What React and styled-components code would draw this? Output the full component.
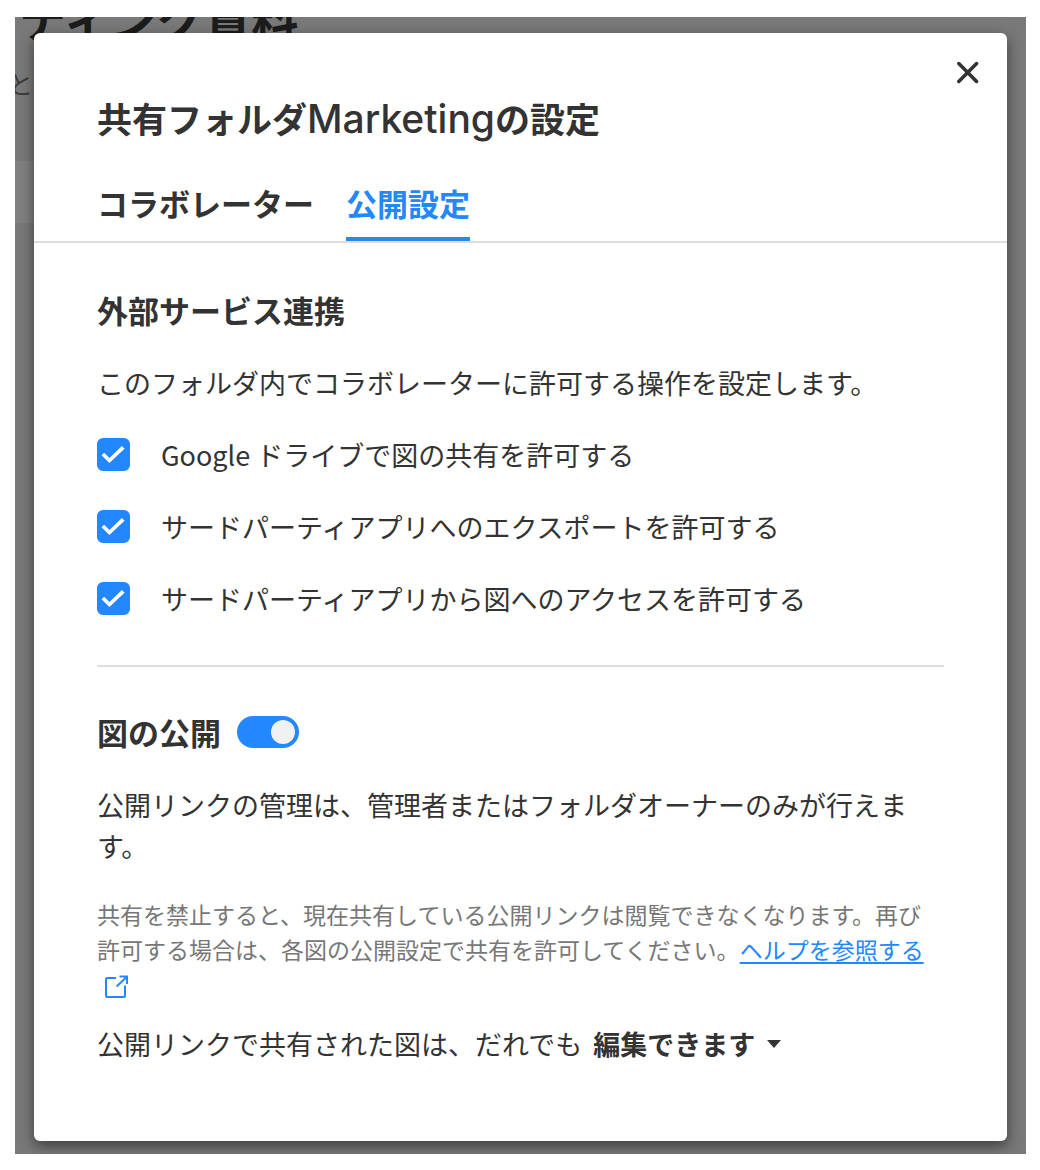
import React, { useState } from 'react';
import styled, { createGlobalStyle } from 'styled-components';

const permissions = [
  { id: 'drive', label: 'Google ドライブで図の共有を許可する' },
  { id: 'export', label: 'サードパーティアプリへのエクスポートを許可する' },
  { id: 'access', label: 'サードパーティアプリから図へのアクセスを許可する' },
];

const Permission = ({ id, label }) => {
  const [checked, setChecked] = useState(true);

  return (
    <CheckRow htmlFor={id}>
      <CheckMark>
        <CheckInput id={id} type="checkbox" checked={checked} onChange={() => setChecked(!checked)} />
        {checked && (
          <svg viewBox="0 0 34 34" aria-hidden="true">
            <path d="M6 16.5 12.8 23.2 27 9.6" fill="none" stroke="#fff" strokeWidth="3.8" />
          </svg>
        )}
      </CheckMark>
      {label}
    </CheckRow>
  );
};

const App = () => {
  const [published, setPublished] = useState(true);

  return (
    <Page>
      <GlobalStyle />
      {/* Folder page dimmed behind the dialog */}
      <Behind aria-hidden="true">
        <BehindTitle>マーケティング資料</BehindTitle>
        <BehindText>ひと</BehindText>
        <BehindBand />
      </Behind>

      <Dialog role="dialog" aria-labelledby="dialog-title">
        <Header>
          <Title id="dialog-title">共有フォルダ<Latin>Marketing</Latin>の設定</Title>
          <CloseButton type="button" aria-label="閉じる">
            <svg width="32" height="32" viewBox="0 0 32 32" aria-hidden="true">
              <path d="M6.8 7.6 24.6 25.4M24.6 7.6 6.8 25.4" stroke="#333" strokeWidth="3.6" strokeLinecap="round" />
            </svg>
          </CloseButton>
        </Header>

        <Tabs role="tablist">
          <Tab type="button" role="tab" aria-selected="false">コラボレーター</Tab>
          <Tab type="button" role="tab" aria-selected="true" $active>公開設定</Tab>
        </Tabs>

        <Body>
          <SectionTitle>外部サービス連携</SectionTitle>
          <Text>このフォルダ内でコラボレーターに許可する操作を設定します。</Text>
          <CheckList>
            {permissions.map((p) => <Permission key={p.id} {...p} />)}
          </CheckList>

          <Divider />

          <SectionRow>
            <SectionTitle as="label" htmlFor="publish">図の公開</SectionTitle>
            <Switch
              id="publish"
              type="checkbox"
              role="switch"
              checked={published}
              onChange={() => setPublished(!published)}
            />
          </SectionRow>
          <Text>公開リンクの管理は、管理者またはフォルダオーナーのみが行えます。</Text>
          <Note>
            共有を禁止すると、現在共有している公開リンクは閲覧できなくなります。再び許可する場合は、各図の公開設定で共有を許可してください。<HelpLink href="#help">ヘルプを参照する</HelpLink>
            <ExternalIcon viewBox="0 0 26 26" aria-hidden="true">
              <path d="M12 4H3a1 1 0 0 0-1 1v17a1 1 0 0 0 1 1h17a1 1 0 0 0 1-1V11.5" />
              <path d="M15.5 2.5H23V10M22.6 2.9 12.6 12.4" />
            </ExternalIcon>
          </Note>
          <AccessRow>
            <label htmlFor="access-level">公開リンクで共有された図は、だれでも</label>
            <SelectBox>
              <Select id="access-level" defaultValue="edit">
                <option value="edit">編集できます</option>
                <option value="view">閲覧できます</option>
              </Select>
              <Caret viewBox="0 0 14 8" aria-hidden="true">
                <path d="M0 0H14L7 8Z" fill="#333" />
              </Caret>
            </SelectBox>
          </AccessRow>
        </Body>
      </Dialog>
    </Page>
  );
};

export default App;

const GlobalStyle = createGlobalStyle`
  * {
    box-sizing: border-box;
  }

  body {
    margin: 17px 14px 16px 15px;
    background: #fff;
    color: #333;
    font-family: 'Noto Sans CJK JP', sans-serif;
  }

  button, select, input {
    margin: 0;
    font-family: inherit;
    color: inherit;
  }
`

const Page = styled.div`
  display: grid;
  grid-template-columns: minmax(0, 1fr);
  overflow: hidden;
  background: #797979;
`

const Behind = styled.div`
  grid-area: 1 / 1;
  color: #1c1c1c;
`

const BehindTitle = styled.div`
  margin: -24px 0 0 -136px;
  font-size: 47px;
  font-weight: 700;
  line-height: 48px;
  white-space: nowrap;
`

const BehindText = styled.div`
  margin: 22px 0 0 -31px;
  color: #3c3c3c;
  font-size: 25px;
  line-height: 41px;
`

const BehindBand = styled.div`
  width: 50%;
  height: 62px;
  margin-top: 57px;
  background: #808080;
`

const Dialog = styled.section`
  grid-area: 1 / 1;
  position: relative;
  margin: 16px 19px 13px;
  padding-bottom: 77px;
  border-radius: 6px;
  background: #fff;
  box-shadow: 0 5px 14px rgba(0, 0, 0, 0.5);
`

const Header = styled.header`
  display: flex;
  justify-content: space-between;
  align-items: flex-start;
  padding: 23px 23px 0 63px;
`

const Title = styled.h1`
  margin: 38px 0 0;
  font-size: 35px;
  font-weight: 700;
  line-height: 48px;
`

const Latin = styled.span`
  font-family: Inter, sans-serif;
  font-size: 39px;
  font-weight: 500;
  line-height: 1;
`

const CloseButton = styled.button`
  display: flex;
  padding: 0;
  border: 0;
  background: none;
  cursor: pointer;
`

const Tabs = styled.div`
  display: flex;
  gap: 32px;
  padding: 41px 63px 0;
  border-bottom: 2px solid #ddd;
`

const Tab = styled.button`
  padding: 0 0 14px;
  border: 0;
  border-bottom: 4px solid ${(props) => (props.$active ? '#2e86e8' : 'transparent')};
  background: none;
  color: ${(props) => (props.$active ? '#2388fb' : '#333')};
  font-size: 31px;
  font-weight: 700;
  line-height: 40px;
  cursor: pointer;
`

const Body = styled.div`
  padding: 43px 63px 0;
`

const SectionTitle = styled.h2`
  margin: 0;
  font-size: 31px;
  font-weight: 700;
  line-height: 48px;
`

const SectionRow = styled.div`
  display: flex;
  align-items: center;
  gap: 16px;
`

const Text = styled.p`
  margin: 28px 0 31px;
  font-size: 27px;
  line-height: 41px;
`

const CheckList = styled.div`
  display: flex;
  flex-direction: column;
  gap: 31px;
`

const CheckRow = styled.label`
  display: flex;
  align-items: center;
  gap: 31px;
  font-size: 27px;
  line-height: 41px;
`

const CheckMark = styled.span`
  display: grid;
  width: 33px;
  height: 33px;

  > * {
    grid-area: 1 / 1;
  }

  svg {
    pointer-events: none;
  }
`

const CheckInput = styled.input`
  appearance: none;
  border: 2px solid #aaa;
  border-radius: 6px;

  &:checked {
    border-color: #2388ff;
    background: #2388ff;
  }
`

const Divider = styled.hr`
  height: 2px;
  margin: 46px 0 41px;
  border: 0;
  background: #ddd;
`

const Switch = styled.input`
  appearance: none;
  display: flex;
  align-items: center;
  width: 62px;
  height: 32px;
  padding: 0 4px;
  border-radius: 16px;
  background: #aaa;
  cursor: pointer;

  &::before {
    content: '';
    width: 24px;
    height: 24px;
    border-radius: 50%;
    background: #f1f1f1;
  }

  &:checked {
    justify-content: flex-end;
    background: #2388ff;
  }
`

const Note = styled.p`
  margin: 0 0 21px;
  color: #777;
  font-size: 23px;
  line-height: 35px;
`

const HelpLink = styled.a`
  color: #2388ff;
  text-decoration: underline;
  text-decoration-thickness: 2px;
  text-underline-offset: 3px;
  text-decoration-skip-ink: none;
`

const ExternalIcon = styled.svg`
  width: 26px;
  height: 26px;
  margin-left: 7px;
  vertical-align: -6px;
  fill: none;
  stroke: #2388ff;
  stroke-width: 2;
`

const AccessRow = styled.div`
  display: flex;
  align-items: center;
  gap: 11px;
  font-size: 27px;
  line-height: 41px;
`

const SelectBox = styled.span`
  display: grid;
  align-items: center;
  justify-items: end;

  > * {
    grid-area: 1 / 1;
  }
`

const Select = styled.select`
  appearance: none;
  height: 41px;
  padding: 0 26px 0 0;
  border: 0;
  background: none;
  font-size: 27px;
  font-weight: 700;
  line-height: 41px;
  cursor: pointer;
`

const Caret = styled.svg`
  width: 14px;
  height: 8px;
  pointer-events: none;
`
